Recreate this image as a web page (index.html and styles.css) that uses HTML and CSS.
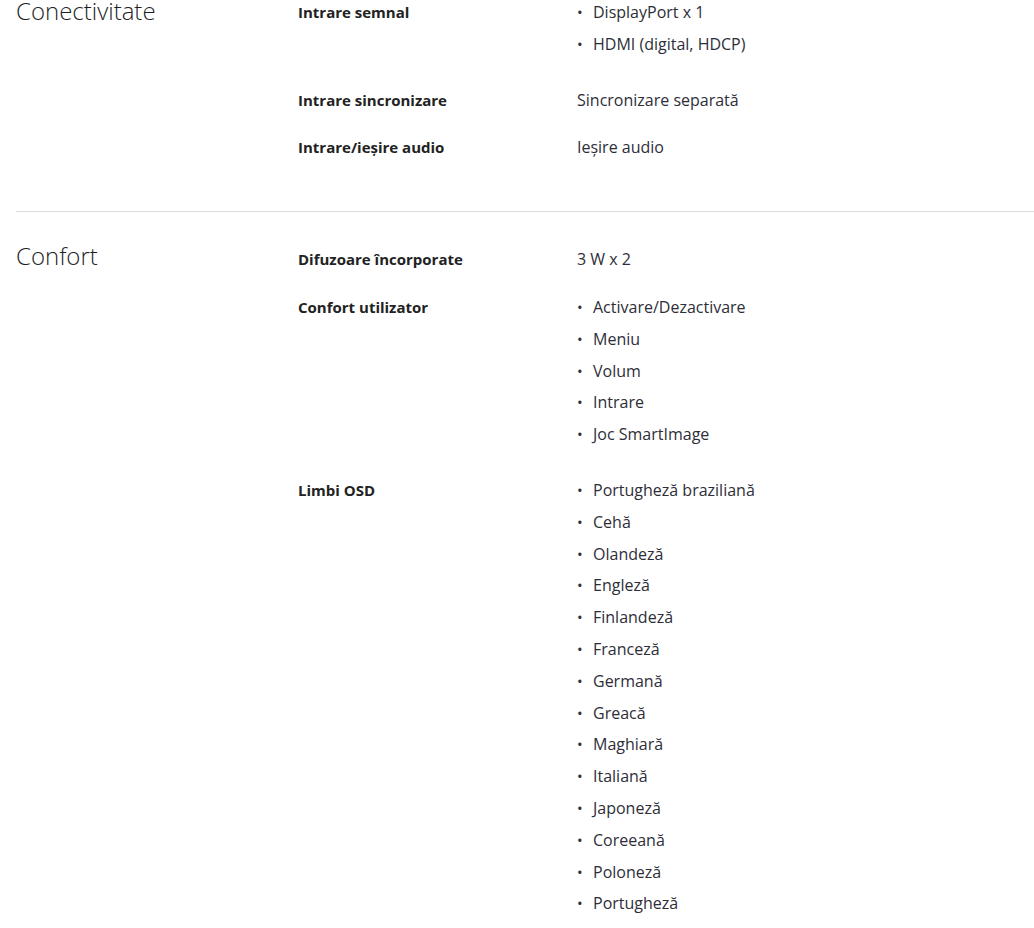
FILE: index.html
```html
<!DOCTYPE html>
<html lang="ro">

<head>
  <meta charset="utf-8">
  <meta content="width=device-width, initial-scale=1.0" name="viewport">
  <title>Specificații</title>
  <link rel="stylesheet" href="styles.css">
</head>

<body>
  <div class="specs">
    <section class="spec-group spec-group-first">
      <h2 class="spec-title">Conectivitate</h2>
      <dl class="spec-rows">
        <div class="spec-row">
          <dt>Intrare semnal</dt>
          <dd>
            <ul class="spec-list">
              <li>DisplayPort x 1</li>
              <li>HDMI (digital, HDCP)</li>
            </ul>
          </dd>
        </div>
        <div class="spec-row">
          <dt>Intrare sincronizare</dt>
          <dd>Sincronizare separată</dd>
        </div>
        <div class="spec-row">
          <dt>Intrare/ieșire audio</dt>
          <dd>Ieșire audio</dd>
        </div>
      </dl>
    </section>

    <section class="spec-group">
      <h2 class="spec-title">Confort</h2>
      <dl class="spec-rows">
        <div class="spec-row">
          <dt>Difuzoare încorporate</dt>
          <dd>3 W x 2</dd>
        </div>
        <div class="spec-row">
          <dt>Confort utilizator</dt>
          <dd>
            <ul class="spec-list">
              <li>Activare/Dezactivare</li>
              <li>Meniu</li>
              <li>Volum</li>
              <li>Intrare</li>
              <li>Joc SmartImage</li>
            </ul>
          </dd>
        </div>
        <div class="spec-row">
          <dt>Limbi OSD</dt>
          <dd>
            <ul class="spec-list">
              <li>Portugheză braziliană</li>
              <li>Cehă</li>
              <li>Olandeză</li>
              <li>Engleză</li>
              <li>Finlandeză</li>
              <li>Franceză</li>
              <li>Germană</li>
              <li>Greacă</li>
              <li>Maghiară</li>
              <li>Italiană</li>
              <li>Japoneză</li>
              <li>Coreeană</li>
              <li>Poloneză</li>
              <li>Portugheză</li>
            </ul>
          </dd>
        </div>
      </dl>
    </section>
  </div>
</body>

</html>
```

FILE: styles.css
```css
*,
*::before,
*::after {
  box-sizing: border-box;
}

body {
  margin: 0;
  background: #fff;
  color: #333;
  font-family: "Open Sans", "Liberation Sans", sans-serif;
  font-size: 15px;
}

.specs {
  padding-left: 16px;
}

.spec-group {
  display: grid;
  grid-template-columns: 282px 1fr;
  padding: 36px 0 27px;
}

.spec-group-first {
  padding-top: 1px;
  border-bottom: 1px solid #dcdcdc;
}

.spec-title {
  margin: -4px 0 0;
  font-size: 24px;
  font-weight: 300;
  line-height: 24px;
  color: #1f1f1f;
}

.spec-group-first .spec-title {
  margin-top: -2px;
}

.spec-rows {
  margin: 0;
}

.spec-row {
  display: grid;
  grid-template-columns: 279px 1fr;
  padding-bottom: 24px;
  line-height: 23.8px;
}

.spec-row dt {
  font-weight: 700;
  color: #222;
}

.spec-row dd {
  margin: 0;
  font-size: 16px;
  color: #2e2e38;
}

.spec-list {
  margin: 0;
  padding: 0;
  list-style: none;
}

.spec-list li {
  display: flex;
  margin-bottom: 8px;
}

.spec-list li::before {
  content: "•";
  flex: 0 0 16px;
  font-size: 15px;
}
```
